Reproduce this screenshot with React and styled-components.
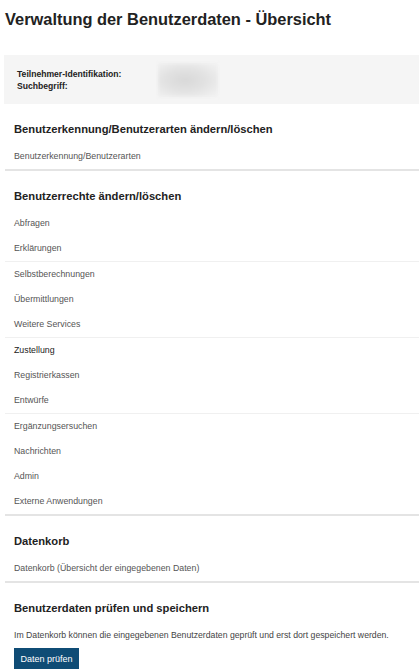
import React from "react";
import styled, { createGlobalStyle } from "styled-components";

const Global = createGlobalStyle`
  html, body { margin: 0; padding: 0; background: #ffffff; }
  body { font-family: "Liberation Sans", Arial, sans-serif; color: #222; }
`;

const Page = styled.div`
  padding: 7px 0 0 5px;
  display: flex;
  flex-direction: column;
`;

const Title = styled.h1`
  margin: 0;
  font-size: 16.4px;
  line-height: 24px;
  font-weight: 700;
  color: #222;
`;

const InfoBox = styled.div`
  margin-top: 24px;
  margin-left: -1px;
  height: 49px;
  background: #f5f5f5;
  display: flex;
  align-items: center;
  padding-left: 13px;
`;

const Labels = styled.div`
  display: flex;
  flex-direction: column;
  width: 141px;
  font-size: 8.6px;
  line-height: 12px;
  font-weight: 700;
  color: #222;
`;

const Redacted = styled.div`
  width: 60px;
  height: 34px;
  background: radial-gradient(ellipse at 45% 50%, #d8d8d8 0%, #e2e2e2 45%, #ececec 75%, #f3f3f3 100%);
  filter: blur(1.5px);
`;

const Section = styled.section`
  padding-top: 14px;
  border-bottom: ${(p) => (p.$last ? "none" : "2px solid #e4e4e4")};
  display: flex;
  flex-direction: column;
`;

const Heading = styled.h2`
  margin: 0 0 4px 0;
  padding-left: 9px;
  font-size: 11.2px;
  line-height: 22px;
  font-weight: 700;
  color: #222;
`;

const Group = styled.div`
  display: flex;
  flex-direction: column;
  border-bottom: ${(p) => (p.$divider ? "1px solid #f0f0f0" : "none")};
`;

const Item = styled.div`
  padding-left: 9px;
  height: 25px;
  line-height: 25px;
  font-size: 8.8px;
  color: ${(p) => (p.$strong ? "#222" : "#555")};
`;

const Paragraph = styled.p`
  margin: 0;
  padding-left: 9px;
  height: 25px;
  line-height: 25px;
  font-size: 8.7px;
  color: #444;
`;

const ButtonRow = styled.div`
  padding-left: 9px;
  display: flex;
`;

const PrimaryButton = styled.button`
  height: 21px;
  width: 65px;
  padding: 0;
  border: none;
  background: #0f4c75;
  color: #ffffff;
  font-family: "Liberation Sans", Arial, sans-serif;
  font-size: 9px;
  cursor: pointer;
`;

const rightsGroups = [
  [{ label: "Abfragen" }, { label: "Erklärungen" }],
  [{ label: "Selbstberechnungen" }, { label: "Übermittlungen" }, { label: "Weitere Services" }],
  [{ label: "Zustellung", strong: true }, { label: "Registrierkassen" }, { label: "Entwürfe" }],
  [{ label: "Ergänzungsersuchen" }, { label: "Nachrichten" }, { label: "Admin" }, { label: "Externe Anwendungen" }],
];

export default function App() {
  return (
    <>
      <Global />
      <Page>
        <Title>Verwaltung der Benutzerdaten - Übersicht</Title>
        <InfoBox>
          <Labels>
            <span>Teilnehmer-Identifikation:</span>
            <span>Suchbegriff:</span>
          </Labels>
          <Redacted />
        </InfoBox>

        <Section>
          <Heading>Benutzerkennung/Benutzerarten ändern/löschen</Heading>
          <Item>Benutzerkennung/Benutzerarten</Item>
        </Section>

        <Section>
          <Heading>Benutzerrechte ändern/löschen</Heading>
          {rightsGroups.map((g, i) => (
            <Group key={i} $divider={i < rightsGroups.length - 1}>
              {g.map((it) => (
                <Item key={it.label} $strong={it.strong}>
                  {it.label}
                </Item>
              ))}
            </Group>
          ))}
        </Section>

        <Section>
          <Heading>Datenkorb</Heading>
          <Item>Datenkorb (Übersicht der eingegebenen Daten)</Item>
        </Section>

        <Section $last>
          <Heading>Benutzerdaten prüfen und speichern</Heading>
          <Paragraph>
            Im Datenkorb können die eingegebenen Benutzerdaten geprüft und erst dort gespeichert werden.
          </Paragraph>
          <ButtonRow>
            <PrimaryButton>Daten prüfen</PrimaryButton>
          </ButtonRow>
        </Section>
      </Page>
    </>
  );
}
